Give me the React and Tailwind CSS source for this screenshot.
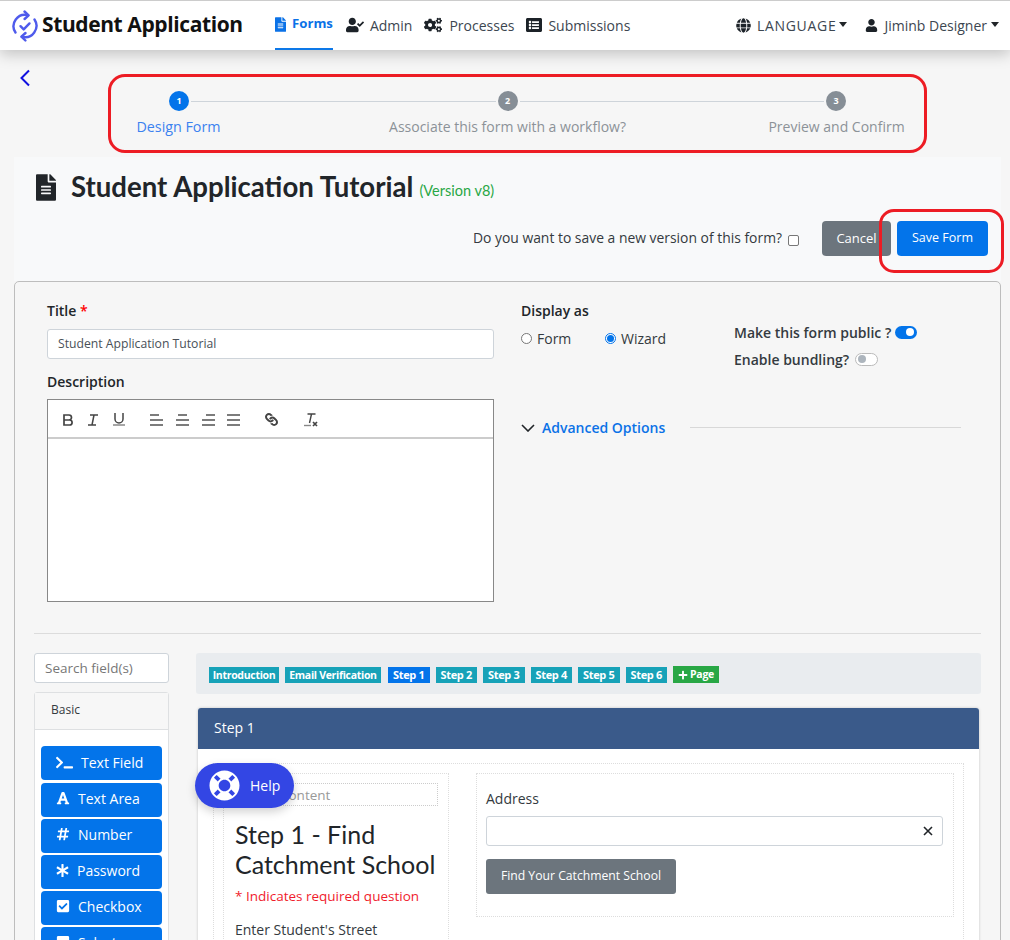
import React from "react";
import { FaFileAlt, FaUserCheck, FaCogs, FaListAlt, FaGlobe, FaUser, FaLifeRing, FaTerminal, FaFont, FaHashtag, FaAsterisk, FaCheckSquare, FaCaretSquareDown, FaLink, FaPlus } from "react-icons/fa";

function Logo() {
  return (
    <svg width="26" height="32" viewBox="0 0 26 32" fill="none" stroke="#4f5bec" strokeWidth="2.4" strokeLinecap="round" strokeLinejoin="round">
      <path d="M3.5 22.5A11.4 11.4 0 0 1 16 5.2" />
      <path d="M22.5 9.5A11.4 11.4 0 0 1 10 26.8" />
      <path d="M12.5 1.5 16.6 5.3 12.6 9" />
      <path d="M13.5 23 9.4 26.7 13.4 30.5" />
      <path d="M8.5 16.2l3.2 3.2 5.8-6" stroke="#4f5bec" />
    </svg>
  );
}

function Caret({ wide }) {
  return <span className={wide ? "inline-block w-0 h-0 border-x-[4px] border-x-transparent border-t-[5px] border-t-[#212529] ml-[4px] mt-[-1px]" : "inline-block w-0 h-0 border-x-[4px] border-x-transparent border-t-[5px] border-t-[#212529] ml-[3px] mt-[-1px]"} />;
}

function Step({ n, active }) {
  return (
    <div className={active ? "w-[20px] h-[20px] rounded-full bg-[#0374ea] text-white text-[9px] font-bold flex items-center justify-center shrink-0" : "w-[20px] h-[20px] rounded-full bg-[#868e96] text-white text-[9px] font-bold flex items-center justify-center shrink-0"}>{n}</div>
  );
}

function ToolLines({ kind }) {
  const rows = {
    left: [[0, 9], [0, 13], [0, 13]],
    center: [[2, 9], [0, 13], [0, 13]],
    right: [[4, 9], [0, 13], [0, 13]],
    justify: [[0, 13], [0, 13], [0, 13]],
  }[kind];
  return (
    <svg width="13" height="12" viewBox="0 0 13 12" stroke="#444" strokeWidth="1.4">
      {rows.map((r, i) => <line key={i} x1={r[0]} x2={r[0] + r[1]} y1={1 + i * 5} y2={1 + i * 5} />)}
    </svg>
  );
}

function Toolbar() {
  return (
    <div className="h-[39px] border-b-[2px] border-[#ccc] flex items-center pl-[14px] pt-[2px] text-[#444]">
      <svg width="12" height="12" viewBox="0 0 12 12" fill="none" stroke="#444" strokeWidth="1.7" className="mr-[13px]"><path d="M2 1h5a2.4 2.4 0 0 1 0 5H2zM2 6h5.6a2.5 2.5 0 0 1 0 5H2z" /></svg>
      <svg width="12" height="12" viewBox="0 0 12 12" fill="none" stroke="#444" strokeWidth="1.5" className="mr-[14px]"><path d="M3 1h8M1 11h8M7 1 5 11" /></svg>
      <svg width="12" height="13" viewBox="0 0 12 13" fill="none" stroke="#444" strokeWidth="1.5" className="mr-[25px]"><path d="M2 0v6a4 4 0 0 0 8 0V0" /><path d="M0 12h12" stroke="#888" /></svg>
      <span className="mr-[13px] flex"><ToolLines kind="left" /></span>
      <span className="mr-[13px] flex"><ToolLines kind="center" /></span>
      <span className="mr-[12px] flex"><ToolLines kind="right" /></span>
      <span className="mr-[25px] flex"><ToolLines kind="justify" /></span>
      <FaLink className="text-[#444] text-[13px] mr-[26px] rotate-90" />
      <svg width="14" height="14" viewBox="0 0 14 14" fill="none" stroke="#444" strokeWidth="1.4"><path d="M3.5 1h8M7.5 1 5.5 10" /><path d="M0 12.5h7" stroke="#888" /><path d="M9 9l4 4M13 9l-4 4" strokeWidth="1.7" /></svg>
    </div>
  );
}

function Badge({ label, box }) {
  return <span className={"h-[16px] text-white font-bold tracking-[-0.3px] leading-[16px] text-center whitespace-nowrap shrink-0 " + box}>{label}</span>;
}

function FieldButton({ icon, label, extra }) {
  return (
    <div className={"h-[34px] shrink-0 rounded-[4px] bg-[#0374ea] text-white text-[14px] flex items-center pl-[15px] " + (extra || "gap-[8px] pb-[4px]")}>
      <span className="flex">{icon}</span>
      <span>{label}</span>
    </div>
  );
}

export default function App() {
  return (
    <div className="relative w-[1010px] h-[940px] overflow-hidden bg-[#f6f6f6] text-[#212529] font-['Open_Sans',sans-serif] text-[14px]">
      <header className="relative z-10 h-[50px] border-t-[1px] border-[#ccc] bg-white shadow-[0_4px_14px_rgba(0,0,0,0.22)] flex items-center pl-[12px] pr-[11px]">
        <Logo />
        <div className="ml-[4px] pb-[1px] text-[21px] font-bold text-[#111] w-[233px] font-['Open_Sans',sans-serif] tracking-[-0.4px]">Student Application</div>
        <div className="h-full flex items-center gap-[12px] text-[14px] text-[#3c4650]">
          <div className="h-full flex items-center gap-[6px] border-b-[2px] border-[#0d78e8] text-[#0b72e7] text-[13.2px] font-bold pb-[1px]">
            <FaFileAlt className="w-[11px] h-[15px]" />
            <span>Forms</span>
          </div>
          <div className="ml-[1px] flex items-center gap-[6px] pb-[1px]">
            <FaUserCheck className="text-[18px] text-[#1c2228]" />
            <span>Admin</span>
          </div>
          <div className="flex items-center gap-[7px] pb-[1px]">
            <FaCogs className="text-[18px] text-[#1c2228]" />
            <span>Processes</span>
          </div>
          <div className="flex items-center gap-[6px] pb-[1px]">
            <FaListAlt className="text-[16px] text-[#1c2228]" />
            <span>Submissions</span>
          </div>
        </div>
        <div className="ml-auto flex items-center text-[14px] text-[#3c4650] pb-[1px]">
          <FaGlobe className="text-[#1c2228] text-[15px] mr-[6px]" />
          <span className="tracking-[0.7px]">LANGUAGE</span><Caret />
          <FaUser className="text-[#1c2228] text-[13px] ml-[18px] mr-[6px]" />
          <span>Jiminb Designer</span><Caret wide />
        </div>
      </header>

      <div className="pl-[14px] pr-[9px]">
        <div className="h-[107px] relative">
          <svg width="12" height="18" viewBox="0 0 12 18" fill="none" stroke="#1010e0" strokeWidth="2" className="absolute left-[5px] top-[19px]"><path d="M10 1.5 2.5 9l7.5 7.5" /></svg>
          <div className="pt-[41px] flex items-center pl-[155px] pr-[155px]">
            <Step n="1" active />
            <div className="flex-1 h-[1px] bg-[#ced4da] mx-[2px]" />
            <Step n="2" />
            <div className="flex-1 h-[1px] bg-[#ced4da] mx-[2px]" />
            <Step n="3" />
          </div>
          <div className="mt-[5px] grid grid-cols-3 text-[14px] text-center text-[#8c9298]">
            <div className="text-[14.3px] text-[#3b82f0]">Design Form</div>
            <div>Associate this form with a workflow?</div>
            <div>Preview and Confirm</div>
          </div>
        </div>

        <div className="h-[124px] bg-[#f8f9fa] pl-[22px] pr-[13px] pt-[14px]">
          <div className="flex items-center">
            <FaFileAlt className="text-[#212529] w-[20px] h-[27px]" />
            <div className="ml-[15px] text-[27.6px] font-bold leading-[32px] font-['Lato',sans-serif]">Student Application Tutorial</div>
            <div className="ml-[6px] mt-[7px] text-[14.5px] text-[#28a745] font-['Lato',sans-serif]">(Version v8)</div>
          </div>
          <div className="mt-[18px] flex items-center justify-end">
            <span className="text-[13.9px] text-[#343a40]">Do you want to save a new version of this form?</span>
            <span className="ml-[6px] mt-[4px] w-[11px] h-[11px] rounded-[2px] border border-[#777] bg-white" />
            <div className="ml-[23px] w-[69px] h-[35px] rounded-[4px] bg-[#6c757d] text-white text-[13px] flex items-center justify-center">Cancel</div>
            <div className="ml-[6px] w-[91px] h-[35px] rounded-[4px] bg-[#0374ea] text-white text-[12.5px] flex items-center justify-center">Save Form</div>
          </div>
        </div>

        <div className="rounded-t-[5px] border border-[#bdbdbd] h-[700px] px-[19px] pt-[20px]">
          <div className="flex pl-[13px]">
            <div className="w-[447px]">
              <div className="text-[14px] font-semibold leading-[18px]">Title <span className="text-[#f00]">*</span></div>
              <div className="mt-[9px] h-[30px] rounded-[3px] border border-[#ced4da] bg-white flex items-center pl-[10px] text-[12.2px] text-[#495057]">Student Application Tutorial</div>
              <div className="mt-[14px] text-[14px] font-semibold leading-[18px]">Description</div>
              <div className="mt-[8px] border border-[#888] bg-white h-[203px]">
                <Toolbar />
              </div>
            </div>
            <div className="ml-[27px] flex-1 pr-[20px]">
              <div className="flex">
                <div className="w-[213px]">
                  <div className="text-[14px] font-semibold leading-[18px]">Display as</div>
                  <div className="mt-[8px] flex items-center text-[14px] text-[#343a40]">
                    <span className="w-[11px] h-[11px] rounded-full border border-[#777] bg-white" />
                    <span className="ml-[5px] w-[68px]">Form</span>
                    <span className="w-[11px] h-[11px] rounded-full border border-[#0374ea] bg-white flex items-center justify-center"><span className="w-[7px] h-[7px] rounded-full bg-[#0374ea]" /></span>
                    <span className="ml-[5px]">Wizard</span>
                  </div>
                </div>
                <div className="pt-[20px] text-[14px] font-semibold text-[#343a40]">
                  <div className="flex items-center h-[20px]">
                    <span>Make this form public ?</span>
                    <span className="ml-[4px] w-[22px] h-[13px] rounded-full bg-[#0374ea] flex items-center justify-end pr-[3px]"><span className="w-[8px] h-[8px] rounded-full bg-white" /></span>
                  </div>
                  <div className="mt-[7px] flex items-center h-[20px]">
                    <span>Enable bundling?</span>
                    <span className="ml-[6px] w-[23px] h-[13px] rounded-full border border-[#bbb] bg-white flex items-center pl-[2px]"><span className="w-[8px] h-[8px] rounded-full bg-[#adb5bd]" /></span>
                  </div>
                </div>
              </div>
              <div className="mt-[48px] flex items-center">
                <svg width="14" height="8" viewBox="0 0 14 8" fill="none" stroke="#212529" strokeWidth="1.6"><path d="M1 1l6 6 6-6" /></svg>
                <span className="ml-[7px] text-[14px] font-semibold text-[#0b72e7]">Advanced Options</span>
                <div className="ml-[25px] flex-1 h-[1px] bg-[#d8d8d8]" />
              </div>
            </div>
          </div>

          <div className="mt-[31px] h-[1px] bg-[#dcdcdc]" />

          <div className="mt-[19px] flex">
            <div className="w-[135px] shrink-0">
              <div className="h-[30px] rounded-[3px] border border-[#ced4da] bg-white flex items-center pl-[10px] text-[13.5px] text-[#777]">Search field(s)</div>
              <div className="mt-[9px] rounded-t-[3px] border border-[#dee0e2] bg-white">
                <div className="h-[37px] bg-[#f7f7f7] border-b border-[#dee0e2] flex items-center pl-[16px] pb-[2px] text-[12px] text-[#343a40]">Basic</div>
                <div className="px-[6px] pt-[16px] flex flex-col gap-[2px] h-[300px]">
                  <FieldButton icon={<FaTerminal className="text-[17px]" />} label="Text Field" extra="gap-[8px] mb-[1px] pb-[2px]" />
                  <FieldButton icon={<FaFont className="text-[14px]" />} label="Text Area" />
                  <FieldButton icon={<FaHashtag className="text-[14px]" />} label="Number" />
                  <FieldButton icon={<FaAsterisk className="text-[13px]" />} label="Password" />
                  <FieldButton icon={<FaCheckSquare className="text-[14px]" />} label="Checkbox" />
                  <FieldButton icon={<FaCaretSquareDown className="text-[14px]" />} label="Select" />
                </div>
              </div>
            </div>
            <div className="ml-[27px] flex-1 min-w-0">
              <div className="h-[41px] rounded-[3px] bg-[#e9ecef] flex items-center gap-[6px] pl-[13px] pt-[3px]">
                <Badge label="Introduction" box="bg-[#17a2b8] text-[10.5px] w-[70px]" />
                <Badge label="Email Verification" box="bg-[#17a2b8] text-[10.5px] w-[96px]" />
                <Badge label="Step 1" box="ml-[1px] bg-[#0374ea] text-[11px] w-[41.5px]" />
                <Badge label="Step 2" box="bg-[#17a2b8] text-[11px] w-[41.5px]" />
                <Badge label="Step 3" box="bg-[#17a2b8] text-[11px] w-[41.5px]" />
                <Badge label="Step 4" box="bg-[#17a2b8] text-[11px] w-[41.5px]" />
                <Badge label="Step 5" box="bg-[#17a2b8] text-[11px] w-[41.5px]" />
                <Badge label="Step 6" box="bg-[#17a2b8] text-[11px] w-[41.5px]" />
                <span className="h-[17px] w-[46px] mt-[-1px] bg-[#28a745] text-white text-[10.5px] font-bold tracking-[-0.3px] flex items-center justify-center gap-[2px] whitespace-nowrap"><FaPlus className="text-[10px]" />Page</span>
              </div>
              <div className="mt-[14px] mx-[2px] rounded-t-[3px] bg-white shadow-[0_0_3px_rgba(0,0,0,0.2)] h-[300px]">
                <div className="h-[41px] rounded-t-[3px] bg-[#3a5a8a] text-white text-[14px] flex items-center pl-[16px] pb-[2px]">Step 1</div>
                <div className="mt-[14px] mx-[15px] border border-dotted border-[#ddd] h-[300px] p-[9px] flex">
                  <div className="w-[226px] shrink-0 border border-dotted border-[#ddd] pl-[9px] pr-[10px] pt-[9px]">
                    <div className="h-[23px] border border-dotted border-[#ccc] pl-[46px] text-[13.5px] leading-[22px] text-[#999]">Content</div>
                    <div className="mt-[13px] pl-[2px] text-[25px] leading-[30px] text-[#212529] font-['Lato',sans-serif] whitespace-nowrap">Step 1 - Find<br />Catchment School</div>
                    <div className="mt-[7px] pl-[2px] text-[13.5px] text-[#f01c2c]">* Indicates required question</div>
                    <div className="mt-[13px] pl-[2px] text-[14px] text-[#343a40]">Enter Student's Street</div>
                  </div>
                  <div className="ml-[27px] flex-1 h-[144px] border border-dotted border-[#ddd] pl-[9px] pr-[10px] pt-[16px]">
                    <div className="text-[14px] leading-[18px] text-[#343a40]">Address</div>
                    <div className="mt-[8px] h-[30px] rounded-[3px] border border-[#ced4da] bg-white flex items-center justify-end pr-[9px]">
                      <svg width="10" height="10" viewBox="0 0 10 10" stroke="#212529" strokeWidth="1.6"><path d="M1 1l8 8M9 1l-8 8" /></svg>
                    </div>
                    <div className="mt-[13px] w-[190px] h-[35px] rounded-[3px] bg-[#6c757d] text-white text-[12.2px] flex items-center justify-center">Find Your Catchment School</div>
                  </div>
                </div>
              </div>
            </div>
          </div>
        </div>
      </div>

      {/* floating help button */}
      <div className="absolute z-20 left-[195px] top-[763px] w-[99px] h-[45px] rounded-full bg-[#3346e4] shadow-[0_4px_10px_rgba(0,0,0,0.18)] flex items-center pl-[14px] text-white text-[14px]">
        <FaLifeRing className="text-[31px]" />
        <span className="ml-[10px]">Help</span>
      </div>

      {/* red annotations drawn over the screenshot */}
      <div className="absolute z-20 left-[108px] top-[74px] w-[819px] h-[79px] border-[3px] border-[#ed1c24] rounded-[17px] pointer-events-none" />
      <div className="absolute z-20 left-[879px] top-[209px] w-[125px] h-[64px] border-[3px] border-[#ed1c24] rounded-[15px] pointer-events-none" />
    </div>
  );
}
